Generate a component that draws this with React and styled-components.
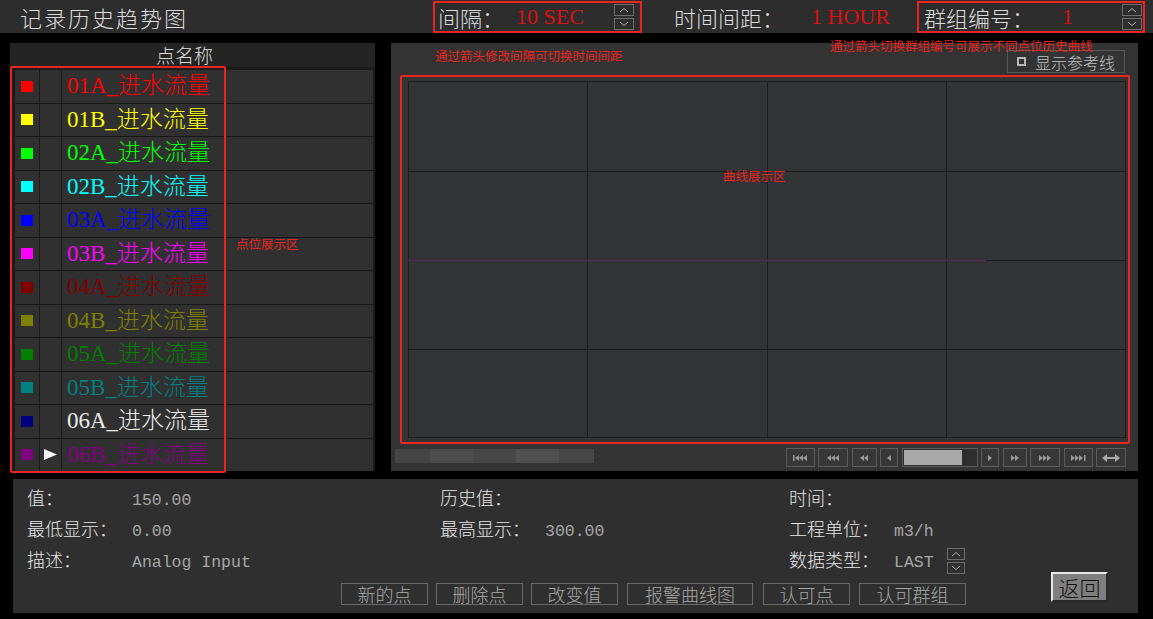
import React from 'react'
import styled, { createGlobalStyle } from 'styled-components'

const CJK = `"Noto Sans CJK SC", sans-serif`
const SERIF = `"Liberation Serif", "Noto Sans CJK SC", serif`
const MONO = `"Liberation Mono", "Noto Sans CJK SC", monospace`
const RED = '#e8251f'

const GlobalStyle = createGlobalStyle`
  html, body {
    margin: 0;
    padding: 0;
    background: #000;
  }
  body {
    width: 1153px;
    height: 619px;
    overflow: hidden;
    font-family: ${CJK};
  }
`

const Page = styled.div`
  width: 1153px;
  height: 619px;
  display: flex;
  flex-direction: column;
  background: #000;
`

/* ---------- top bar ---------- */

const TopBar = styled.header`
  height: 33px;
  flex-shrink: 0;
  display: flex;
  align-items: center;
  background: #2d2d2d;
`

const Title = styled.h1`
  width: 413px;
  margin: 0 0 0 20px;
  font: 300 22px ${CJK};
  letter-spacing: 2px;
  color: #dcdcdc;
`

const FieldBox = styled.div`
  display: flex;
  align-items: center;
  box-sizing: border-box;
  width: ${p => p.width}px;
  height: 32px;
  margin-left: ${p => p.offset || 0}px;
  padding-left: ${p => p.pad || 3}px;
  border: 2px solid ${p => (p.outlined ? RED : 'transparent')};
`

const FieldLabel = styled.span`
  width: ${p => p.width}px;
  font: 300 22px ${CJK};
  color: #dcdcdc;
`

const FieldValue = styled.span`
  flex: 1;
  font: 22px ${SERIF};
  color: #dc1010;
`

const SpinWrap = styled.div`
  display: flex;
  flex-direction: column;
  gap: ${p => p.gap || 2}px;
  margin-right: ${p => p.right || 0}px;
`

const SpinButton = styled.div`
  box-sizing: border-box;
  width: ${p => p.w || 20}px;
  height: ${p => p.h || 12}px;
  border: 1px solid #6c6c6c;
  display: flex;
  align-items: center;
  justify-content: center;
`

const Spinner = ({ right, w, h, gap }) => (
  <SpinWrap right={right} gap={gap}>
    <SpinButton w={w} h={h}>
      <svg width="10" height="6" viewBox="0 0 10 6">
        <polyline points="1,5 5,1.5 9,5" fill="none" stroke="#b0b0b0" strokeWidth="1" />
      </svg>
    </SpinButton>
    <SpinButton w={w} h={h}>
      <svg width="10" height="6" viewBox="0 0 10 6">
        <polyline points="1,1 5,4.5 9,1" fill="none" stroke="#b0b0b0" strokeWidth="1" />
      </svg>
    </SpinButton>
  </SpinWrap>
)

/* ---------- main area ---------- */

const Main = styled.main`
  display: flex;
  gap: 16px;
  height: 428px;
  margin-top: 10px;
  padding-left: 10px;
  flex-shrink: 0;
`

const LeftPanel = styled.section`
  position: relative;
  width: 365px;
  display: flex;
  flex-direction: column;
  background: #1b1b1b;
`

const ListHeader = styled.div`
  height: 24px;
  flex-shrink: 0;
  padding-right: 16px;
  background: #242424;
  display: flex;
  align-items: center;
  justify-content: center;
  font: 300 19px ${CJK};
  line-height: 24px;
  color: #dcdcdc;
`

const List = styled.div`
  flex: 1;
  min-height: 0;
  display: flex;
  flex-direction: column;
  width: 358px;
  margin: 3px 0 0 5px;
`

const Row = styled.div`
  flex: 1 1 0;
  min-height: 0;
  overflow: hidden;
  display: grid;
  grid-template-columns: 25px 22px 1fr;
  background: #303030;
  border-bottom: 1px solid #171717;
  &:last-child {
    border-bottom: none;
  }
`

const Cell = styled.div`
  display: flex;
  align-items: center;
  justify-content: ${p => (p.left ? 'flex-start' : 'center')};
  padding-left: ${p => (p.left ? 5 : 0)}px;
  border-right: ${p => (p.left ? 'none' : '1px solid #1a1a1a')};
`

const Swatch = styled.span`
  width: 12px;
  height: 11px;
  background: ${p => p.color};
`

const PointName = styled.span`
  font: 300 23px ${SERIF};
  line-height: 26px;
  color: ${p => p.color};
  white-space: nowrap;
`

const AnnotBox = styled.div`
  position: absolute;
  left: ${p => p.x}px;
  top: ${p => p.y}px;
  width: ${p => p.w}px;
  height: ${p => p.h}px;
  box-sizing: border-box;
  border: 2px solid ${RED};
  border-radius: 2px;
  pointer-events: none;
`

const AnnotText = styled.span`
  position: absolute;
  left: ${p => p.x}px;
  top: ${p => p.y}px;
  font: 12.5px ${CJK};
  line-height: 15px;
  color: ${RED};
  white-space: nowrap;
`

const ChartPanel = styled.section`
  position: relative;
  width: 747px;
  display: flex;
  flex-direction: column;
  background: #333333;
`

const ChartTop = styled.div`
  height: 32px;
  display: flex;
  align-items: flex-start;
  padding-left: 44px;
`

const Hint = styled.span`
  margin-top: 5px;
  font: 12.5px ${CJK};
  line-height: 15px;
  color: ${RED};
`

const ToggleButton = styled.div`
  box-sizing: border-box;
  width: 118px;
  height: 23px;
  margin: 7px 13px 0 auto;
  border: 1px solid #575757;
  display: flex;
  align-items: center;
  gap: 9px;
  padding-left: 9px;
  font: 300 16px ${CJK};
  color: #c0c0c0;
`

const CheckBox = styled.span`
  box-sizing: border-box;
  width: 9px;
  height: 9px;
  border: 2px solid #b8b8b8;
`

const Plot = styled.div`
  height: 357px;
  margin: 6px 12px 0 17px;
  background: #323335;
`

const Controls = styled.div`
  display: flex;
  align-items: flex-start;
  height: 19px;
  margin-top: 10px;
  padding: 0 12px 0 4px;
`

const ScrollStrip = styled.div`
  display: flex;
  height: 14px;
  margin-top: 1px;
`

const StripPart = styled.span`
  width: ${p => p.w}px;
  background: ${p => p.c};
`

const NavGroup = styled.div`
  display: flex;
  gap: 3.5px;
  margin-left: auto;
`

const NavButton = styled.div`
  box-sizing: border-box;
  width: ${p => p.w}px;
  height: 19px;
  border: 1px solid #5c5c5c;
  background: #373737;
  display: flex;
  align-items: center;
  justify-content: center;
`

const Slider = styled.div`
  box-sizing: border-box;
  width: 76px;
  height: 19px;
  border: 1px solid #5c5c5c;
  background: #2e2e2e;
  padding: 1px;
  display: flex;
`

const SliderFill = styled.span`
  background: #a9a9a9;
`

/* ---------- bottom panel ---------- */

const Bottom = styled.section`
  box-sizing: border-box;
  width: 1125px;
  height: 134px;
  margin: 8px 0 0 13px;
  padding: 4px 0 0 14px;
  background: #2f2f2f;
  display: flex;
  flex-direction: column;
`

const InfoGrid = styled.div`
  display: grid;
  grid-template-columns: 413px 349px 1fr;
  grid-auto-rows: 31px;
`

const InfoItem = styled.div`
  display: flex;
  align-items: baseline;
  height: 31px;
`

const InfoLabel = styled.span`
  width: 105px;
  font: 300 18px ${CJK};
  line-height: 28px;
  color: #e6e6e6;
`

const InfoValue = styled.span`
  font: 16.5px ${MONO};
  line-height: 28px;
  color: #a6a6a6;
  margin-right: 13px;
`

const SpinSlot = styled.div`
  align-self: center;
`

const ActionRow = styled.div`
  display: flex;
  align-items: flex-end;
  height: 29px;
  padding-left: 314px;
`

const ActionButton = styled.button`
  box-sizing: border-box;
  width: ${p => p.w}px;
  height: 22px;
  margin-right: ${p => p.gap}px;
  padding: 0;
  border: 1px solid #686868;
  background: transparent;
  font: 300 18px ${CJK};
  line-height: 20px;
  color: #a8a8a8;
`

const BackButton = styled.button`
  box-sizing: border-box;
  width: 57px;
  height: 30px;
  margin: 0 30px 3px auto;
  padding: 0;
  background: #7f7f7f;
  border: 2px solid;
  border-color: #e8e8e8 #2a2a2a #2a2a2a #e8e8e8;
  font: 300 21px ${CJK};
  line-height: 24px;
  color: #111;
`

const points = [
  { name: '01A_进水流量', color: '#ff0000' },
  { name: '01B_进水流量', color: '#ffff00' },
  { name: '02A_进水流量', color: '#00ff00' },
  { name: '02B_进水流量', color: '#00ffff' },
  { name: '03A_进水流量', color: '#0000ff' },
  { name: '03B_进水流量', color: '#ff00ff' },
  { name: '04A_进水流量', color: '#800000' },
  { name: '04B_进水流量', color: '#808000' },
  { name: '05A_进水流量', color: '#008000' },
  { name: '05B_进水流量', color: '#008080' },
  { name: '06A_进水流量', color: '#000080', text: '#ececec' },
  { name: '06B_进水流量', color: '#800080', current: true },
]

const tri = (x, dir) =>
  dir === 'l' ? `${x},4 ${x + 4},1 ${x + 4},7` : `${x + 4},4 ${x},1 ${x},7`

const navIcons = {
  first: { bar: 1, tris: [3, 7, 11], dir: 'l' },
  fastback: { tris: [2, 6, 10], dir: 'l' },
  back2: { tris: [4, 8], dir: 'l' },
  back: { tris: [6], dir: 'l' },
  fwd: { tris: [6], dir: 'r' },
  fwd2: { tris: [4, 8], dir: 'r' },
  fastfwd: { tris: [2, 6, 10], dir: 'r' },
  last: { bar: 14, tris: [1, 5, 9], dir: 'r' },
}

const NavIcon = ({ type }) => {
  if (type === 'both') {
    return (
      <svg width="18" height="8" viewBox="0 0 18 8">
        <polygon points="0,4 5,0 5,8" fill="#a8a8a8" />
        <polygon points="18,4 13,0 13,8" fill="#a8a8a8" />
        <rect x="4" y="3" width="10" height="2" fill="#a8a8a8" />
      </svg>
    )
  }
  const icon = navIcons[type]
  return (
    <svg width="16" height="8" viewBox="0 0 16 8">
      {icon.bar !== undefined && <rect x={icon.bar} y="1" width="1.5" height="6" fill="#9a9a9a" />}
      {icon.tris.map(x => (
        <polygon key={x} points={tri(x, icon.dir)} fill="#9a9a9a" />
      ))}
    </svg>
  )
}

const PlotGrid = () => (
  <svg width="718" height="357" viewBox="0 0 718 357" style={{ display: 'block' }}>
    <rect x="0.5" y="0.5" width="717" height="356" fill="#323335" stroke="#1f1f20" />
    {[179.5, 359.5, 538.5].map(x => (
      <line key={x} x1={x} y1="0" x2={x} y2="357" stroke="#1c1c1d" />
    ))}
    {[90.5, 179.5, 268.5].map(y => (
      <line key={y} x1="0" y1={y} x2="718" y2={y} stroke="#1c1c1d" />
    ))}
    <line x1="0" y1="179.5" x2="578" y2="179.5" stroke="#4e2a4e" strokeWidth="1.5" />
  </svg>
)

const App = () => (
  <Page>
    <GlobalStyle />
    <TopBar>
      <Title>记录历史趋势图</Title>
      <FieldBox outlined width={209}>
        <FieldLabel width={78}>间隔：</FieldLabel>
        <FieldValue>10 SEC</FieldValue>
        <Spinner right={6} />
      </FieldBox>
      <FieldBox width={248} offset={27} pad={0}>
        <FieldLabel width={137}>时间间距：</FieldLabel>
        <FieldValue>1 HOUR</FieldValue>
      </FieldBox>
      <FieldBox outlined width={228} pad={5}>
        <FieldLabel width={138}>群组编号：</FieldLabel>
        <FieldValue>1</FieldValue>
        <Spinner right={1} />
      </FieldBox>
    </TopBar>

    <Main>
      <LeftPanel>
        <ListHeader>点名称</ListHeader>
        <List>
          {points.map(p => (
            <Row key={p.name}>
              <Cell>
                <Swatch color={p.color} />
              </Cell>
              <Cell>
                {p.current && (
                  <svg width="13" height="11" viewBox="0 0 13 11">
                    <polygon points="0,0 13,5.5 0,11" fill="#f4f4f4" />
                  </svg>
                )}
              </Cell>
              <Cell left>
                <PointName color={p.text || p.color}>{p.name}</PointName>
              </Cell>
            </Row>
          ))}
        </List>
        <AnnotBox x={0} y={23} w={216} h={407} />
        <AnnotText x={226} y={193}>点位展示区</AnnotText>
      </LeftPanel>

      <ChartPanel>
        <ChartTop>
          <Hint>通过箭头修改间隔可切换时间间距</Hint>
          <ToggleButton>
            <CheckBox />
            显示参考线
          </ToggleButton>
        </ChartTop>
        <Plot>
          <PlotGrid />
        </Plot>
        <Controls>
          <ScrollStrip>
            <StripPart w={35} c="#454545" />
            <StripPart w={43} c="#4c4c4c" />
            <StripPart w={43} c="#474747" />
            <StripPart w={43} c="#4f4f4f" />
            <StripPart w={35} c="#474747" />
          </ScrollStrip>
          <NavGroup>
            <NavButton w={29}><NavIcon type="first" /></NavButton>
            <NavButton w={30}><NavIcon type="fastback" /></NavButton>
            <NavButton w={25}><NavIcon type="back2" /></NavButton>
            <NavButton w={18}><NavIcon type="back" /></NavButton>
            <Slider>
              <SliderFill style={{ width: '81%' }} />
            </Slider>
            <NavButton w={18}><NavIcon type="fwd" /></NavButton>
            <NavButton w={24}><NavIcon type="fwd2" /></NavButton>
            <NavButton w={30}><NavIcon type="fastfwd" /></NavButton>
            <NavButton w={29}><NavIcon type="last" /></NavButton>
            <NavButton w={30}><NavIcon type="both" /></NavButton>
          </NavGroup>
        </Controls>
        <AnnotBox x={9} y={32} w={730} h={369} />
        <AnnotText x={439} y={-5}>通过箭头切换群组编号可展示不同点位历史曲线</AnnotText>
        <AnnotText x={332} y={125}>曲线展示区</AnnotText>
      </ChartPanel>
    </Main>

    <Bottom>
      <InfoGrid>
        <InfoItem>
          <InfoLabel>值：</InfoLabel>
          <InfoValue>150.00</InfoValue>
        </InfoItem>
        <InfoItem>
          <InfoLabel>历史值：</InfoLabel>
        </InfoItem>
        <InfoItem>
          <InfoLabel>时间：</InfoLabel>
        </InfoItem>
        <InfoItem>
          <InfoLabel>最低显示：</InfoLabel>
          <InfoValue>0.00</InfoValue>
        </InfoItem>
        <InfoItem>
          <InfoLabel>最高显示：</InfoLabel>
          <InfoValue>300.00</InfoValue>
        </InfoItem>
        <InfoItem>
          <InfoLabel>工程单位：</InfoLabel>
          <InfoValue>m3/h</InfoValue>
        </InfoItem>
        <InfoItem>
          <InfoLabel>描述：</InfoLabel>
          <InfoValue>Analog Input</InfoValue>
        </InfoItem>
        <InfoItem />
        <InfoItem>
          <InfoLabel>数据类型：</InfoLabel>
          <InfoValue>LAST</InfoValue>
          <SpinSlot>
            <Spinner w={18} h={12} gap={2} />
          </SpinSlot>
        </InfoItem>
      </InfoGrid>
      <ActionRow>
        <ActionButton w={87} gap={8}>新的点</ActionButton>
        <ActionButton w={87} gap={8}>删除点</ActionButton>
        <ActionButton w={87} gap={9}>改变值</ActionButton>
        <ActionButton w={126} gap={10}>报警曲线图</ActionButton>
        <ActionButton w={87} gap={9}>认可点</ActionButton>
        <ActionButton w={107} gap={0}>认可群组</ActionButton>
        <BackButton>返回</BackButton>
      </ActionRow>
    </Bottom>
  </Page>
)

export default App
